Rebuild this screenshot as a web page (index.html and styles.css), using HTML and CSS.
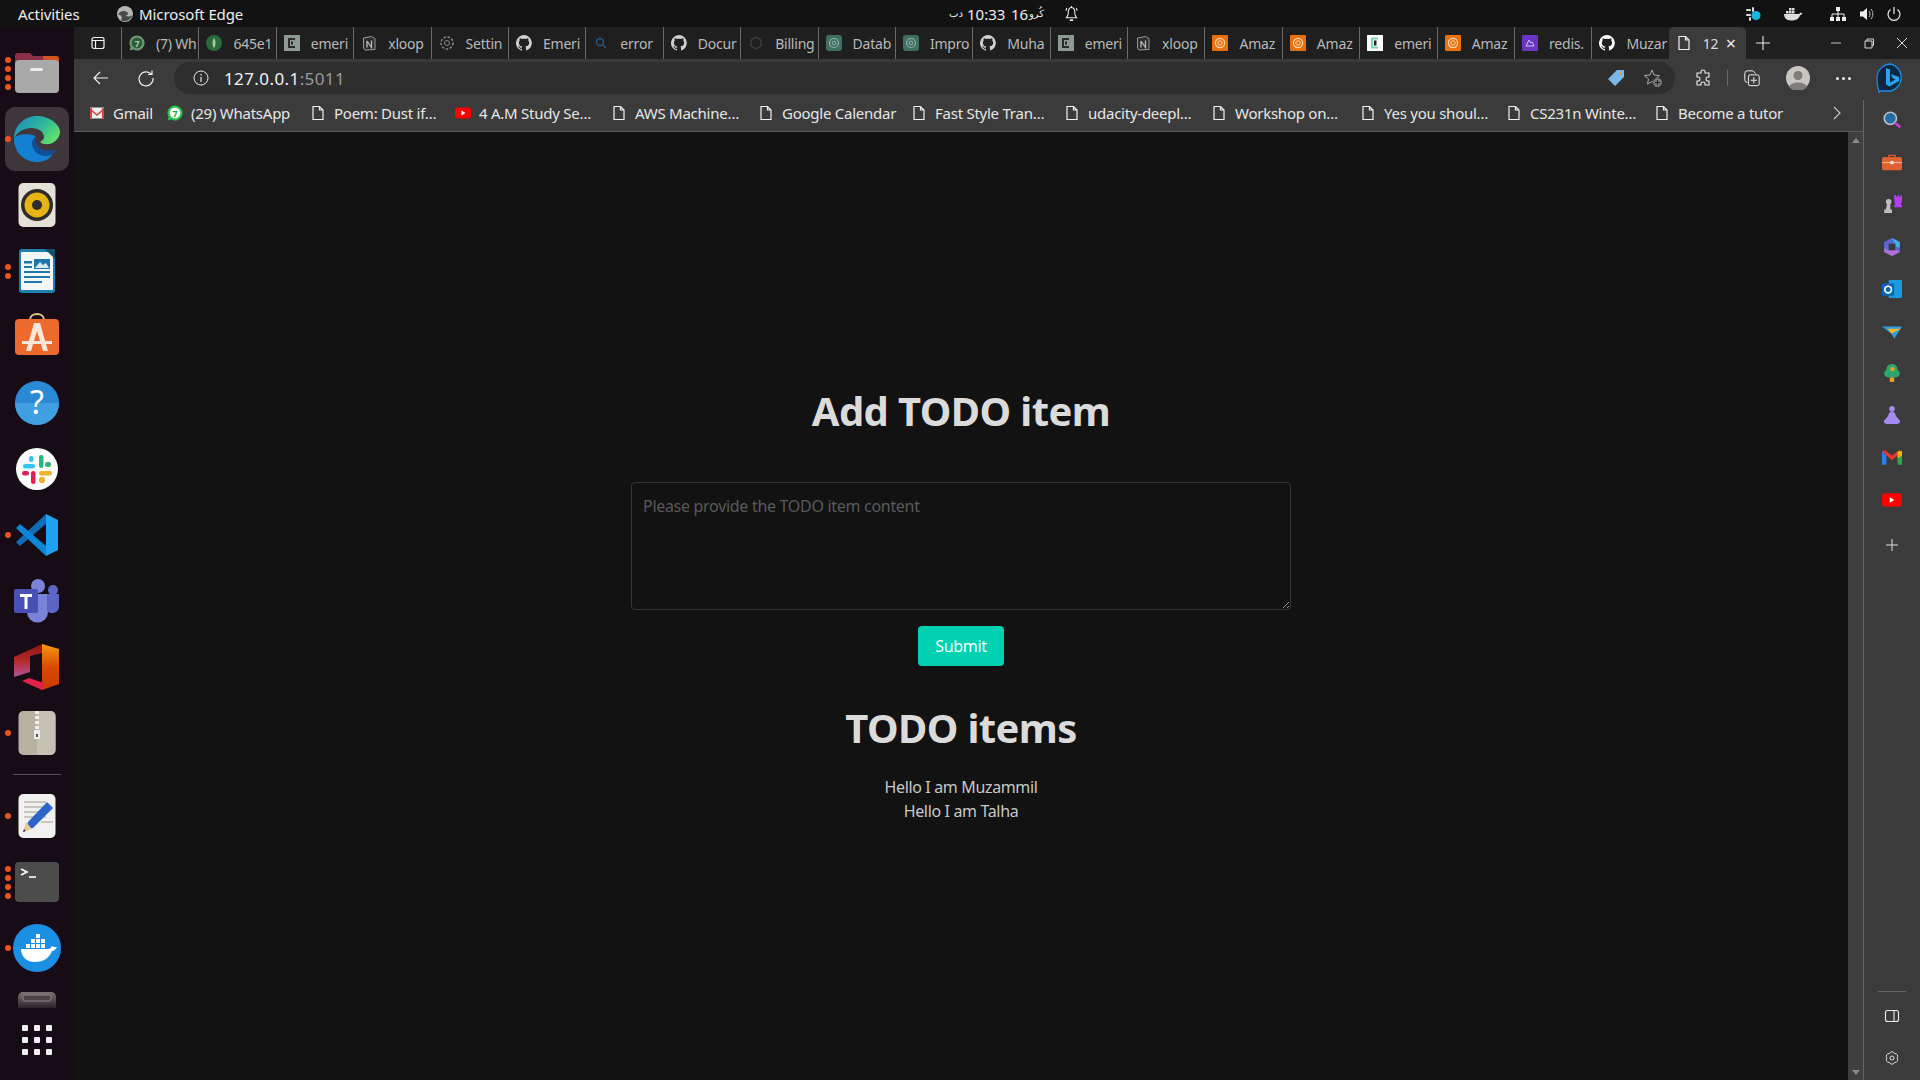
FILE: index.html
```html
<!DOCTYPE html>
<html lang="en">
<head>
    <meta charset="UTF-8">
    <title>Add TODO item</title>
    <link rel="stylesheet" href="styles.css">
</head>
<body>

<svg class="defs" width="0" height="0">
    <defs>
        <symbol id="doc" viewBox="0 0 16 16"><path d="M3 1.5h6.500L13 5v9.500H3z M9.500 1.500V5H13" fill="none" stroke="#f0f0f0" stroke-width="1.200"/></symbol>
        <symbol id="github" viewBox="0 0 16 16"><path fill="currentColor" d="M8 0a8 8 0 0 0-2.500 15.600c.4.100.5-.2.5-.4v-1.400c-2.200.5-2.700-1-2.700-1-.4-.9-.9-1.200-.9-1.200-.7-.5.100-.5.100-.5.800.1 1.200.8 1.200.8.700 1.200 1.900.9 2.300.7.100-.5.300-.9.500-1.100-1.800-.2-3.600-.9-3.600-4 0-.9.300-1.600.800-2.100-.1-.2-.4-1 .1-2.100 0 0 .7-.2 2.200.8a7.600 7.600 0 0 1 4 0c1.500-1 2.200-.8 2.200-.8.400 1.100.2 1.900.1 2.100.5.600.8 1.300.8 2.100 0 3.100-1.900 3.700-3.700 3.900.3.300.6.800.6 1.500v2.200c0 .2.100.5.600.4A8 8 0 0 0 8 0z"/></symbol>
        <symbol id="whatsapp" viewBox="0 0 16 16"><path fill="#25c24a" d="M8 .5a7.500 7.500 0 0 0-6.400 11.400L.6 15.500l3.700-1A7.500 7.500 0 1 0 8 .5z"/><circle cx="8" cy="8" r="5.400" fill="#fff"/><text x="8" y="11.500" class="fav-num" fill="#25a244">7</text></symbol>
        <symbol id="whatsapp-dim" viewBox="0 0 16 16"><path fill="#6f9a78" d="M8 .5a7.500 7.500 0 0 0-6.400 11.400L.6 15.500l3.700-1A7.500 7.500 0 1 0 8 .5z"/><circle cx="8" cy="8" r="5.400" fill="#2a5a38"/><text x="8" y="11.500" class="fav-num" fill="#9fd0aa">7</text></symbol>
        <symbol id="emeritus" viewBox="0 0 16 16"><rect width="16" height="16" fill="#8d9a94"/><path d="M11 4H5v8h6" fill="none" stroke="#2b2b2b" stroke-width="2"/><rect x="7" y="6.500" width="2" height="3" fill="#2b2b2b"/></symbol>
        <symbol id="emeritus-white" viewBox="0 0 16 16"><rect width="16" height="16" fill="#fff"/><path d="M11 3.500H5v9h6" fill="none" stroke="#7fd3b0" stroke-width="2"/><rect x="7" y="5.500" width="2.500" height="5" fill="#222"/></symbol>
        <symbol id="notion" viewBox="0 0 16 16"><path d="M2.500 3l8-1.500L14 3.500v11l-10 .500-1.500-2z" fill="#2c2c2c" stroke="#9a9a9a"/><path d="M6 6v6.500M6 6l4.500 6.500V5.500" fill="none" stroke="#bdbdbd" stroke-width="1.300"/></symbol>
        <symbol id="amazon" viewBox="0 0 16 16"><rect width="16" height="16" rx="1" fill="#e8700f"/><circle cx="8" cy="8" r="4.600" fill="none" stroke="#f8d9b0" stroke-width="1.200"/><circle cx="8" cy="8" r="2.200" fill="none" stroke="#f8d9b0"/></symbol>
        <symbol id="openai" viewBox="0 0 16 16"><rect width="16" height="16" rx="3" fill="#3f6f63"/><circle cx="8" cy="8" r="4.500" fill="none" stroke="#8fb5aa" stroke-width="1.200"/><circle cx="8" cy="8" r="1.800" fill="none" stroke="#8fb5aa"/></symbol>
        <symbol id="cube" viewBox="0 0 16 16"><path d="M8 2l5 3v6l-5 3-5-3V5z" fill="none" stroke="#4a4a4a"/></symbol>
    </defs>
</svg>

<div class="topbar">
    <span class="activities">Activities</span>
    <div class="appname">
        <svg class="appname-icon" viewBox="0 0 16 16"><circle cx="8" cy="8" r="8" fill="#b5b5b5"/><path d="M1 9c1-4 6-5 9-3 2 1.500 1 3-1 3 2 3 5 1 6.500 0C14 14 8 17 4 14 6 12 4 8 1 9z" fill="#4a4a4a"/></svg>
        <span>Microsoft Edge</span>
    </div>
    <div class="clock">
        <span class="clock-ar">دب</span>
        <span class="clock-time">10:33</span>
        <span class="clock-day">16</span>
        <span class="clock-ar clock-month">كُرو</span>
        <svg class="bell" viewBox="0 0 16 18"><path d="M8 2C5 2 4.500 5 4.500 8c0 2-1 4-2 5h11c-1-1-2-3-2-5 0-3-.5-6-3.500-6zM8 .5V2M2 5.500l1-3M14 5.500l-1-3" fill="none" stroke="#eee" stroke-width="1.100"/><rect x="6" y="14.500" width="4" height="2" rx="1" fill="#eee"/></svg>
    </div>
    <div class="tray">
        <svg class="tray-slack" viewBox="0 0 16 16"><rect x="1" y="3" width="5" height="2" rx="1" fill="#ddd"/><rect x="1" y="8" width="5" height="2" rx="1" fill="#ddd"/><rect x="7" y="1" width="2" height="5" rx="1" fill="#ddd"/><rect x="4" y="11" width="2" height="4" rx="1" fill="#ddd"/><circle cx="11" cy="9.500" r="4.500" fill="#19b5e0"/></svg>
        <svg class="tray-docker" viewBox="0 0 20 14"><path d="M1 7h14c1 0 2-.5 2.500-1.500.5.500 1.500.500 2 .5-.5 1.500-1.500 2-2.500 2.200C16 11.500 13 13.500 8 13.500 3 13.500 1 10.500 1 7z" fill="#ddd"/><path d="M3 4h2.500v2.500H3zM6 4h2.500v2.500H6zM9 4h2.500v2.500H9zM6 1h2.500v2.500H6zM9 1h2.500v2.500H9z" fill="#ddd"/></svg>
        <svg class="tray-net" viewBox="0 0 16 16"><path d="M6 1h4v4H6zM0 11h4v4H0zM6 11h4v4H6zM12 11h4v4h-4z" fill="#eee"/><path d="M8 5v6M2 11V8h12v3" stroke="#eee" fill="none"/></svg>
        <svg class="tray-vol" viewBox="0 0 16 16"><path d="M1 5.500h3L8 2v12l-4-3.500H1z" fill="#eee"/><path d="M10 5c1.300 1.500 1.300 4.500 0 6M12 3c2.400 2.500 2.400 7.500 0 10" fill="none" stroke="#bbb"/></svg>
        <svg class="tray-power" viewBox="0 0 16 16"><path d="M8 1v7M4.500 3.500a6 6 0 1 0 7 0" fill="none" stroke="#eee" stroke-width="1.200"/></svg>
    </div>
</div>

<div class="desktop">
    <nav class="dock">
        <div class="dock-item">
            <div class="dots"><i></i><i></i><i></i><i></i></div>
            <svg viewBox="0 0 48 48"><path d="M2 7a3 3 0 0 1 3-3h12l3 3h23a3 3 0 0 1 3 3v8H2z" fill="#8a2f47"/><path d="M30 7h13a3 3 0 0 1 3 3v6H30z" fill="#d1541f"/><rect x="2" y="11" width="44" height="33" rx="4" fill="#a9a9a9"/><rect x="17" y="19" width="13" height="3" rx="1.500" fill="#eee"/></svg>
        </div>
        <div class="dock-item dock-item-active">
            <div class="dots"><i></i></div>
            <svg viewBox="0 0 48 48"><defs><linearGradient id="edgeA" x1="0" y1="0" x2="1" y2=".6"><stop offset="0" stop-color="#1a84c9"/><stop offset=".6" stop-color="#2fb99a"/><stop offset="1" stop-color="#5ede6c"/></linearGradient></defs><path d="M24 1C11 1 1 11 1 24c2-6 9-11 17-11 8 0 13 4 13 9 0 2-2 4-4 5 3 3 10 3 14 0 3-2 6-6 6-10C47 9 36 1 24 1z" fill="url(#edgeA)"/><path d="M1 24c0 13 10 23 23 23 6 0 12-2 16-8-5 3-13 2-17-2-5-5-5-12 0-16C14 18 3 19 1 24z" fill="#1380d2"/><path d="M23 21c-5 4-5 11 0 16 4 4 12 5 17 2 1-1 2-3 3-5-4 2-11 3-16-1-3-2-5-7-4-12z" fill="#0f4f99"/></svg>
        </div>
        <div class="dock-item">
            <svg viewBox="0 0 48 48"><rect x="5.500" y="2" width="37" height="44" rx="5" fill="#e4e1d6"/><circle cx="24" cy="24" r="16" fill="#2e2c2a"/><circle cx="24" cy="24" r="12.500" fill="#e7b416"/><circle cx="24" cy="24" r="5" fill="#2e2c2a"/></svg>
        </div>
        <div class="dock-item">
            <div class="dots"><i></i><i></i></div>
            <svg viewBox="0 0 48 48"><path d="M6 5a3 3 0 0 1 3-3h23l10 10v31a3 3 0 0 1-3 3H9a3 3 0 0 1-3-3z" fill="#1f7fb0"/><rect x="8" y="5" width="32" height="38" rx="1" fill="#f4f6f7"/><path d="M32 2h10v10z" fill="#174f6f"/><path d="M11 14h8v2.500h-8zM11 19h8v2h-8zM11 24h26v2H11zM11 29h26v2H11zM11 34h18v2H11z" fill="#1f78ad"/><rect x="21" y="12" width="16" height="10" fill="#1f78ad"/><path d="M22 21l5-6 3 3 3-2 3 5z" fill="#dbe9f2"/></svg>
        </div>
        <div class="dock-item">
            <svg viewBox="0 0 48 48"><path d="M17 7c0-8 14-8 14 0" fill="none" stroke="#e8c48e" stroke-width="2"/><rect x="2" y="6" width="44" height="36" rx="4" fill="#ec6a2c"/><path d="M21 10h6l8 28h-5l-6-20-6 20h-5zM9 28h30v3H9z" fill="#fbe6da"/></svg>
        </div>
        <div class="dock-item">
            <svg viewBox="0 0 48 48"><circle cx="24" cy="24" r="22" fill="#2b8ad6"/><path d="M2 24h44a22 22 0 0 1-44 0z" fill="#3f9fe0"/><text x="24" y="35" class="dock-help">?</text></svg>
        </div>
        <div class="dock-item">
            <svg viewBox="0 0 48 48"><circle cx="24" cy="24" r="21" fill="#fff"/><rect x="10" y="19" width="12" height="4.500" rx="2.200" fill="#36c5f0"/><rect x="16" y="11" width="4.500" height="6" rx="2.200" fill="#36c5f0"/><rect x="26" y="10" width="4.500" height="13" rx="2.200" fill="#2eb67d"/><rect x="32" y="17" width="6" height="5" rx="2.200" fill="#2eb67d"/><rect x="26" y="26" width="13" height="4.500" rx="2.200" fill="#ecb22e"/><rect x="26" y="32" width="6" height="6" rx="2.200" fill="#ecb22e"/><rect x="18" y="26" width="4.500" height="13" rx="2.200" fill="#e01e5a"/><rect x="9" y="26" width="7" height="4.500" rx="2.200" fill="#e01e5a"/></svg>
        </div>
        <div class="dock-item">
            <div class="dots"><i></i></div>
            <svg viewBox="0 0 48 48"><path d="M33 3L3 31l4 4 26-22z" fill="#0f6db5"/><path d="M33 45L3 17l4-4 26 22z" fill="#0a85d8"/><path d="M33 3l12 6v30l-12 6z" fill="#20a0f0"/></svg>
        </div>
        <div class="dock-item">
            <svg viewBox="0 0 48 48"><circle cx="25" cy="9" r="7" fill="#7b83d9"/><circle cx="40" cy="13" r="5" fill="#5c64c4"/><path d="M14 17h21v18a10 10 0 0 1-21 0z" fill="#7b83d9"/><path d="M34 17h12v13a7 7 0 0 1-12 4z" fill="#5c64c4"/><rect x="1" y="12" width="24" height="24" rx="2" fill="#4750b5"/><path d="M7 17h12v3h-4.500v12h-3V20H7z" fill="#fff"/></svg>
        </div>
        <div class="dock-item">
            <svg viewBox="0 0 48 48"><defs><linearGradient id="officeR" x1="0" y1="0" x2="0" y2="1"><stop offset="0" stop-color="#f59a0c"/><stop offset=".5" stop-color="#da4a00"/><stop offset="1" stop-color="#c93c00"/></linearGradient><linearGradient id="officeL" x1="0" y1="0" x2="0" y2="1"><stop offset="0" stop-color="#8c1212"/><stop offset=".5" stop-color="#b52a2a"/><stop offset="1" stop-color="#b0529a"/></linearGradient></defs><path d="M29 1l17 5v35l-17 6z" fill="url(#officeR)"/><path d="M29 1L1 14v20l16-5V13l12-3z" fill="url(#officeL)"/><path d="M9 38l20 9 2-7-15-5z" fill="#e0224a"/></svg>
        </div>
        <div class="dock-item">
            <div class="dots"><i></i></div>
            <svg viewBox="0 0 48 48"><rect x="5.500" y="2" width="37" height="44" rx="5" fill="#b6b2a2"/><path d="M24 2h13.500a5 5 0 0 1 5 5v34a5 5 0 0 1-5 5H24z" fill="#c5c2b3"/><path d="M22 2h4v3h-4zM22 7h4v3h-4zM22 12h4v3h-4zM22 17h4v3h-4z" fill="#eee"/><rect x="21" y="21" width="6" height="9" fill="#eee"/><rect x="23" y="25" width="2" height="3" fill="#555"/></svg>
        </div>
        <div class="dock-sep"></div>
        <div class="dock-item">
            <div class="dots"><i></i></div>
            <svg viewBox="0 0 48 48"><rect x="5.500" y="2" width="37" height="44" rx="5" fill="#f1f1f1"/><path d="M11 9h22v2H11zM11 14h24v2H11zM11 19h24v2H11zM11 24h22v2H11zM28 29h12v2H28z" fill="#c8c6bd"/><path d="M34 10l6 6-20 20-7 2 2-8z" fill="#2a66c9"/><path d="M13 30l-3 10 9-3z" fill="#e9c99b"/><path d="M10 40l1-3 2 2z" fill="#333"/></svg>
        </div>
        <div class="dock-item">
            <div class="dots"><i></i><i></i><i></i><i></i></div>
            <svg viewBox="0 0 48 48"><rect x="2" y="4" width="44" height="40" rx="4" fill="#4c4c4c"/><path d="M8 11l6 3-6 3" fill="none" stroke="#fff" stroke-width="1.600"/><path d="M16 19h7" stroke="#fff" stroke-width="1.600"/></svg>
        </div>
        <div class="dock-item">
            <div class="dots"><i></i></div>
            <svg viewBox="0 0 48 48"><circle cx="24" cy="24" r="24" fill="#1a8fe3"/><path d="M8 25h27c2 0 3-1 4-3 1 1 3 1 5 1-1 2-3 4-5 4-3 7-8 11-17 11-9 0-14-6-14-13z" fill="#fff"/><path d="M13 20h4v4h-4zM18 20h4v4h-4zM23 20h4v4h-4zM28 20h4v4h-4zM18 15h4v4h-4zM23 15h4v4h-4zM28 15h4v4h-4zM23 10h4v4h-4z" fill="#fff"/></svg>
        </div>
        <div class="dock-disk">
            <svg viewBox="0 0 48 16"><defs><linearGradient id="diskA" x1="0" y1="0" x2="0" y2="1"><stop offset="0" stop-color="#7a7476"/><stop offset="1" stop-color="#2c2228"/></linearGradient></defs><path d="M5 16V5a5 5 0 0 1 5-5h28a5 5 0 0 1 5 5v11z" fill="url(#diskA)"/><rect x="10" y="3" width="28" height="6" rx="2" fill="#4a4446" stroke="#8a8486"/></svg>
        </div>
        <div class="dock-grid"><i></i><i></i><i></i><i></i><i></i><i></i><i></i><i></i><i></i></div>
    </nav>

    <div class="browser">
        <div class="tabstrip">
            <svg class="tabstrip-btn" viewBox="0 0 16 16"><path d="M2 4.500A2 2 0 0 1 4 2.500h8a2 2 0 0 1 2 2v7a2 2 0 0 1-2 2H4a2 2 0 0 1-2-2zM2 5.500h12M5.500 5.500v8" fill="none" stroke="#f2f2f2" stroke-width="1.200"/></svg>
            <div class="tabs">
                <div class="tab"><svg><use href="#whatsapp-dim"/></svg><span>(7) Wh</span></div>
                <div class="tab"><svg viewBox="0 0 16 16"><circle cx="8" cy="8" r="8" fill="#2c6a3a"/><path d="M8 3c2 2 2 8 0 10-2-2-2-8 0-10z" fill="#a7c7a7"/></svg><span>645e1</span></div>
                <div class="tab"><svg><use href="#emeritus"/></svg><span>emeri</span></div>
                <div class="tab"><svg><use href="#notion"/></svg><span>xloop</span></div>
                <div class="tab"><svg viewBox="0 0 16 16"><circle cx="8" cy="8" r="2.500" fill="none" stroke="#8a8a8a"/><circle cx="8" cy="8" r="6" fill="none" stroke="#8a8a8a" stroke-width="1.500" stroke-dasharray="2.500 1.500"/></svg><span>Settin</span></div>
                <div class="tab"><svg><use href="#github"/></svg><span>Emeri</span></div>
                <div class="tab"><svg viewBox="0 0 16 16"><circle cx="7" cy="7" r="3.500" fill="none" stroke="#1e5f96" stroke-width="1.300"/><path d="M9.500 9.500l3.500 3.500" stroke="#1e5f96" stroke-width="1.300"/></svg><span>error</span></div>
                <div class="tab"><svg><use href="#github"/></svg><span>Docur</span></div>
                <div class="tab"><svg><use href="#cube"/></svg><span>Billing</span></div>
                <div class="tab"><svg><use href="#openai"/></svg><span>Datab</span></div>
                <div class="tab"><svg><use href="#openai"/></svg><span>Impro</span></div>
                <div class="tab"><svg><use href="#github"/></svg><span>Muha</span></div>
                <div class="tab"><svg><use href="#emeritus"/></svg><span>emeri</span></div>
                <div class="tab"><svg><use href="#notion"/></svg><span>xloop</span></div>
                <div class="tab"><svg><use href="#amazon"/></svg><span>Amaz</span></div>
                <div class="tab"><svg><use href="#amazon"/></svg><span>Amaz</span></div>
                <div class="tab"><svg><use href="#emeritus-white"/></svg><span>emeri</span></div>
                <div class="tab"><svg><use href="#amazon"/></svg><span>Amaz</span></div>
                <div class="tab"><svg viewBox="0 0 16 16"><rect width="16" height="16" rx="1" fill="#6a35c4"/><path d="M4 11l3-6 2 3 1-1 2 4z" fill="none" stroke="#d9c8f5"/></svg><span>redis.</span></div>
                <div class="tab tab-white"><svg><use href="#github"/></svg><span>Muzar</span></div>
                <div class="tab tab-active"><svg><use href="#doc"/></svg><span>12</span><b class="tab-close">×</b></div>
            </div>
            <svg class="newtab" viewBox="0 0 16 16"><path d="M8 1v14M1 8h14" stroke="#e6e6e6" stroke-width="1.100"/></svg>
            <div class="winbtns">
                <svg viewBox="0 0 12 12"><path d="M1 6h10" stroke="#b5b5b5" stroke-width="1.100"/></svg>
                <svg viewBox="0 0 12 12"><path d="M2 4h7v7H2zM4 4V2h6.500v6.500H9" fill="none" stroke="#d8d8d8"/></svg>
                <svg viewBox="0 0 12 12"><path d="M1 1l10 10M11 1L1 11" stroke="#d8d8d8" stroke-width="1"/></svg>
            </div>
        </div>

        <div class="toolbar">
            <svg class="tool-icon" viewBox="0 0 18 18"><path d="M16 9H2M8 3L2 9l6 6" fill="none" stroke="#eee" stroke-width="1.200"/></svg>
            <svg class="tool-icon" viewBox="0 0 18 18"><path d="M14.500 5.500A7 7 0 1 0 16 9M11 5.500h4v-4" fill="none" stroke="#eee" stroke-width="1.200"/></svg>
            <div class="addressbar">
                <svg class="info" viewBox="0 0 16 16"><circle cx="8" cy="8" r="7" fill="none" stroke="#e8e8e8"/><path d="M8 7v5M8 4v1.500" stroke="#e8e8e8" stroke-width="1.200"/></svg>
                <span class="url">127.0.0.1<span class="url-port">:5011</span></span>
                <svg class="addr-tag" viewBox="0 0 18 18"><path d="M10 1h7v7l-9 9-7-7z" fill="#7ab8ea"/><circle cx="13.500" cy="4.500" r="1.500" fill="#d8a51d"/></svg>
                <svg class="addr-fav" viewBox="0 0 20 20"><path d="M9 2l2 5 5.500.5-4 3.500 1 5-4.500-2.500L4.500 16l1-5-4-3.500L7 7z" fill="none" stroke="#aaa"/><circle cx="14.500" cy="14.500" r="4.500" fill="#777"/><path d="M14.500 12v5M12 14.500h5" stroke="#222"/></svg>
            </div>
            <svg class="tool-ext" viewBox="0 0 18 18"><path d="M7 2.500c0-2 4-2 4 0V4h4v4h-1.500c-2 0-2 4 0 4H15v4h-4v-1.500c0-2-4-2-4 0V16H3v-4h1.500c2 0 2-4 0-4H3V4h4z" fill="none" stroke="#eee" stroke-width="1.100"/></svg>
            <i class="tool-sep"></i>
            <svg class="tool-coll" viewBox="0 0 20 20"><path d="M5 15a3 3 0 0 1-3-3V5a3 3 0 0 1 3-3h6l3 3" fill="none" stroke="#eee" stroke-width="1.100"/><rect x="6" y="6.500" width="12" height="12" rx="2" fill="none" stroke="#eee" stroke-width="1.100"/><path d="M12 9v7M8.500 12.500h7" stroke="#eee" stroke-width="1.100"/></svg>
            <svg class="tool-avatar" viewBox="0 0 24 24"><circle cx="12" cy="12" r="12" fill="#c9c5c0"/><circle cx="12" cy="9.500" r="4.500" fill="#7f7c79"/><path d="M3 21c2-6 16-6 18 0a12 12 0 0 1-18 0z" fill="#7f7c79"/></svg>
            <div class="tool-more"><i></i><i></i><i></i></div>
            <svg class="tool-bing" viewBox="0 0 30 30"><path d="M15 1a14 14 0 0 1 0 27H4l-1 1.500C1 22 1 18 1 15A14 14 0 0 1 15 1z" fill="#10253f" stroke="#1a8be0" stroke-width="1.300"/><path d="M10 5l4 1.500v13l5.500-3-3-1.500-1.500-4 8 3v4l-9.500 5.500-3.500-2z" fill="#2aa3ef"/></svg>
        </div>

        <div class="under-toolbar">
            <div class="page-col">
                <div class="bookmarks">
                    <a class="bm bm-gmail"><svg viewBox="0 0 16 16"><rect x="1" y="2.500" width="14" height="11" fill="#eee"/><path d="M1 3l7 6 7-6v2L8 11 1 5z" fill="#d4473b"/><path d="M1 3h2v10.500H1zM13 3h2v10.500h-2z" fill="#d4473b"/></svg><span>Gmail</span></a>
                    <a class="bm bm-wa"><svg><use href="#whatsapp"/></svg><span>(29) WhatsApp</span></a>
                    <a class="bm bm-poem"><svg><use href="#doc"/></svg><span>Poem: Dust if…</span></a>
                    <a class="bm bm-yt"><svg viewBox="0 0 16 16"><rect y="2.500" width="16" height="11" rx="3" fill="#f00"/><path d="M6.500 5.500l4 2.500-4 2.500z" fill="#fff"/></svg><span>4 A.M Study Se…</span></a>
                    <a class="bm bm-aws"><svg><use href="#doc"/></svg><span>AWS Machine…</span></a>
                    <a class="bm bm-cal"><svg><use href="#doc"/></svg><span>Google Calendar</span></a>
                    <a class="bm bm-cal"><svg><use href="#doc"/></svg><span>Fast Style Tran…</span></a>
                    <a class="bm bm-uda"><svg><use href="#doc"/></svg><span>udacity-deepl…</span></a>
                    <a class="bm bm-work"><svg><use href="#doc"/></svg><span>Workshop on…</span></a>
                    <a class="bm bm-yes"><svg><use href="#doc"/></svg><span>Yes you shoul…</span></a>
                    <a class="bm bm-cs"><svg><use href="#doc"/></svg><span>CS231n Winte…</span></a>
                    <a class="bm"><svg><use href="#doc"/></svg><span>Become a tutor</span></a>
                    <svg class="bm-more" viewBox="0 0 10 16"><path d="M2 2l6 6-6 6" fill="none" stroke="#ccc" stroke-width="1.100"/></svg>
                </div>
                <div class="page-row">
                    <main class="page">
                        <h1 class="title">Add TODO item</h1>
                        <textarea class="todo-input" placeholder="Please provide the TODO item content"></textarea>
                        <button class="submit">Submit</button>
                        <h2 class="title title-items">TODO items</h2>
                        <ul class="todo-list">
                            <li>Hello I am Muzammil</li>
                            <li>Hello I am Talha</li>
                        </ul>
                    </main>
                    <div class="scrollbar">
                        <i class="arrow-up"></i>
                        <i class="arrow-down"></i>
                    </div>
                </div>
            </div>
            <aside class="sidebar">
                <svg viewBox="0 0 18 18"><circle cx="7.500" cy="7.500" r="5.500" fill="#1f6fa5" stroke="#bdbdbd" stroke-width="1.500"/><path d="M11.500 11.500l5 4" stroke="#c93bd8" stroke-width="2.500"/></svg>
                <svg viewBox="0 0 18 18"><path d="M6 5V3h6v2" fill="none" stroke="#d9562c" stroke-width="1.200"/><rect y="4.500" width="18" height="12" rx="1.500" fill="#e0602f"/><path d="M0 9.500h18" stroke="#f2b49a"/><rect x="7.500" y="8" width="3" height="3" fill="#ddd"/></svg>
                <svg viewBox="0 0 18 18"><path d="M11 1h1.500v1.500H14V1h1.500v1.500H17V1h1v5l-1 4h1v2h-7v-2h1l-1-4z" fill="#b23ff0"/><circle cx="6" cy="7" r="2.500" fill="#bdbdbd"/><path d="M4.500 9h3v5h1.500v3H2v-3h1.500z" fill="#bdbdbd"/></svg>
                <svg viewBox="0 0 18 18"><path d="M9 1l7 3.500v9L9 17l-7-3.500v-9z" fill="#5a67d8"/><path d="M9 1l7 3.500v5l-4-1V6z" fill="#3bb3ea"/><path d="M2 10l4 2 6-1 4 2.500L9 17l-7-3.500z" fill="#b06fd8"/><path d="M6 6h6v6H6z" fill="#3b3b3b"/></svg>
                <svg viewBox="0 0 18 18"><rect x="6" y="1" width="12" height="16" rx="1" fill="#1c9ae0"/><rect x="0" y="4" width="11" height="11" rx="1" fill="#0a64b8"/><circle cx="5.500" cy="9.500" r="3" fill="none" stroke="#fff" stroke-width="1.500"/></svg>
                <svg viewBox="0 0 18 18"><path d="M0 5h18L11 16 8.500 11.500z" fill="#2c9fe5"/><path d="M5 7h12l-8.500 4.500z" fill="#f0b429"/></svg>
                <svg viewBox="0 0 18 18"><path d="M9 1c4 0 5 3 5 5 1.500 1 2.500 2.500 2 4-.5 2-2 3-4 3H6c-2 0-3.500-1-4-3-.5-1.500.5-3 2-4 0-2 1-5 5-5z" fill="#2ea66b"/><rect x="7" y="13" width="4" height="4" fill="#e9a21f"/><circle cx="9.500" cy="5.500" r="2" fill="#e9a21f"/></svg>
                <svg viewBox="0 0 18 18"><circle cx="9" cy="3.500" r="2.500" fill="#a58af0"/><path d="M9 6c2 0 3 1 3.500 4l3.500 4c1 2-1 3-2 3H4c-1 0-3-1-2-3l3.500-4C6 7 7 6 9 6z" fill="#a58af0"/></svg>
                <svg viewBox="0 0 18 18"><path d="M0 3v12h4V7z" fill="#2c7fe8"/><path d="M18 3v12h-4V7z" fill="#2fa44f"/><path d="M0 3c1-1 3-1 4 0l5 4 5-4c1-1 3-1 4 0L9 11z" fill="#e5392f"/><path d="M14 3.500c1-1 3-1 4-.5v4l-4 2z" fill="#f4b400"/></svg>
                <svg viewBox="0 0 18 18"><rect y="3" width="18" height="12" rx="3" fill="#f00"/><path d="M7 6.500l4 2.500-4 2.500z" fill="#fff"/></svg>
                <svg class="side-plus" viewBox="0 0 14 14"><path d="M7 1v12M1 7h12" stroke="#e0e0e0"/></svg>
                <div class="side-bottom">
                    <i class="side-line"></i>
                    <svg viewBox="0 0 16 16"><rect x="1.500" y="2.500" width="13" height="11" rx="2" fill="none" stroke="#eee" stroke-width="1.100"/><path d="M10 2.500v11" stroke="#eee" stroke-width="1.100"/></svg>
                    <svg viewBox="0 0 16 16"><circle cx="8" cy="8" r="2" fill="none" stroke="#ddd"/><path d="M13 8A2.600 2.600 0 0 1 10.500 12.330A2.600 2.600 0 0 1 5.500 12.330A2.600 2.600 0 0 1 3 8A2.600 2.600 0 0 1 5.500 3.670A2.600 2.600 0 0 1 10.500 3.670A2.600 2.600 0 0 1 13 8z" fill="none" stroke="#ddd"/></svg>
                </div>
            </aside>
        </div>
    </div>
</div>

</body>
</html>
```

FILE: styles.css
```css
* { box-sizing: border-box; }
body {
    margin: 0;
    width: 1920px;
    height: 1080px;
    overflow: hidden;
    background: #121212;
    font-family: "Noto Sans", sans-serif;
    color: #ddd;
    display: flex;
    flex-direction: column;
}
.defs { position: absolute; }
.fav-num { font: bold 9px "Noto Sans", sans-serif; text-anchor: middle; }

/* gnome top bar */
.topbar {
    height: 27px;
    background: #121212;
    display: flex;
    align-items: center;
    position: relative;
    font-size: 15px;
    color: #eee;
    flex-shrink: 0;
}
.activities { margin-left: 18px; width: 99px; letter-spacing: -.1px; }
.appname { display: flex; align-items: center; gap: 6px; letter-spacing: -.1px; }
.appname-icon { width: 16px; height: 16px; }
.clock {
    position: absolute;
    left: 949px;
    top: 0;
    height: 27px;
    display: flex;
    align-items: center;
}
.clock-ar { font: 10px "DejaVu Sans", sans-serif; width: 14px; }
.clock-time { margin-left: 4px; width: 44px; }
.clock-day { width: 18px; }
.clock-month { width: 18px; }
.bell { width: 15px; height: 18px; margin-left: 17px; }
.tray { margin-left: auto; display: flex; align-items: center; }
.tray svg { height: 16px; }
.tray-slack { width: 16px; margin-right: 22px; }
.tray-docker { width: 20px; margin-right: 27px; }
.tray-net { width: 16px; margin-right: 12px; }
.tray-vol { width: 18px; margin-right: 10px; }
.tray-power { width: 16px; margin-right: 18px; }

.desktop { flex: 1; display: flex; min-height: 0; }

/* ubuntu dock */
.dock {
    width: 74px;
    flex-shrink: 0;
    background: #170c15;
    padding-top: 13px;
    display: flex;
    flex-direction: column;
    align-items: center;
}
.dock-item {
    width: 64px;
    height: 66px;
    flex-shrink: 0;
    display: flex;
    align-items: center;
    justify-content: center;
    position: relative;
}
.dock-item svg { width: 48px; height: 48px; }
.dock-item-active { background: #3f363c; border-radius: 10px; height: 64px; margin: 1px 0; }
.dots {
    position: absolute;
    left: 0;
    top: 0;
    bottom: 0;
    width: 6px;
    display: flex;
    flex-direction: column;
    justify-content: center;
    gap: 3px;
}
.dots i { width: 6px; height: 6px; border-radius: 50%; background: #e95420; }
.dock-help { font: 32px "Noto Sans", sans-serif; fill: #fff; text-anchor: middle; }
.dock-sep { width: 48px; height: 1px; background: #5a5257; margin: 8px 0; flex-shrink: 0; }
.dock-disk { height: 16px; width: 48px; flex-shrink: 0; margin-top: 11px; }
.dock-disk svg { display: block; width: 48px; height: 16px; }
.dock-grid {
    margin-top: 17px;
    display: grid;
    grid-template-columns: repeat(3, 6px);
    gap: 6px;
}
.dock-grid i { width: 6px; height: 6px; background: #f0f0f0; border-radius: 1px; }

/* edge chrome */
.browser { flex: 1; display: flex; flex-direction: column; min-width: 0; }
.tabstrip {
    height: 32px;
    flex-shrink: 0;
    background: #1f1f1f;
    display: flex;
    align-items: center;
    padding-left: 16px;
}
.tabstrip-btn { width: 16px; height: 16px; margin-right: 15px; }
.tabs { display: flex; height: 32px; align-items: flex-end; }
.tab {
    width: 77.4px;
    height: 32px;
    padding-left: 7px;
    display: flex;
    align-items: center;
    gap: 11px;
    font-size: 14px;
    color: #b9b9b9;
    white-space: nowrap;
    border-left: 1px solid #6b6b6b;
    letter-spacing: -.2px;
}
.tab svg { width: 16px; height: 16px; flex-shrink: 0; color: #cfcfcf; }
.tab-white svg { color: #fff; }
.tab-active {
    background: #3b3b3b;
    color: #ddd;
    border-left: 0;
    border-radius: 5px 5px 0 0;
}
.tab-active span { width: 16px; }
.tab-close { font-weight: 400; font-size: 18px; line-height: 1; color: #eee; margin-left: -4px; }
.newtab { width: 16px; height: 16px; margin-left: 9px; }
.winbtns { margin-left: auto; display: flex; gap: 21px; padding-right: 12px; }
.winbtns svg { width: 12px; height: 12px; display: block; }

.toolbar {
    height: 38px;
    flex-shrink: 0;
    background: #3b3b3b;
    display: flex;
    align-items: center;
    padding-left: 18px;
}
.tool-icon { width: 18px; height: 18px; margin-right: 27px; }
.addressbar {
    width: 1501px;
    height: 32px;
    margin-left: -8px;
    background: #2e2e2e;
    border-radius: 16px;
    display: flex;
    align-items: center;
    padding-left: 19px;
    font-size: 17px;
    letter-spacing: .4px;
}
.info { width: 16px; height: 16px; margin-right: 15px; }
.url { color: #f2f2f2; }
.url-port { color: #9a9a9a; }
.addr-tag { width: 18px; height: 18px; margin-left: auto; margin-right: 18px; }
.addr-fav { width: 20px; height: 20px; margin-right: 12px; }
.tool-ext { width: 18px; height: 18px; margin-left: 19px; }
.tool-sep { width: 1px; height: 16px; background: #666; margin: 0 15px; }
.tool-coll { width: 18px; height: 18px; }
.tool-avatar { width: 24px; height: 24px; margin-left: 25px; }
.tool-more { display: flex; gap: 3px; margin-left: 26px; }
.tool-more i { width: 3px; height: 3px; background: #f0f0f0; border-radius: 50%; }
.tool-bing { width: 30px; height: 30px; margin-left: 25px; }

.under-toolbar { flex: 1; display: flex; min-height: 0; }
.page-col { flex: 1; display: flex; flex-direction: column; min-width: 0; }

.bookmarks {
    height: 35px;
    flex-shrink: 0;
    background: #3b3b3b;
    border-bottom: 1px solid #5a5a5a;
    display: flex;
    align-items: center;
    padding: 0 0 3px 15px;
    font-size: 15px;
    position: relative;
    letter-spacing: -.25px;
}
.bm { display: flex; align-items: center; gap: 8px; color: #e6e6e6; white-space: nowrap; flex-shrink: 0; }
.bm svg { width: 16px; height: 16px; flex-shrink: 0; }
.bm-gmail { width: 78px; }
.bm-wa { width: 143px; }
.bm-poem { width: 145px; }
.bm-yt { width: 156px; }
.bm-aws { width: 147px; }
.bm-cal { width: 153px; }
.bm-uda { width: 147px; }
.bm-work { width: 149px; }
.bm-yes { width: 146px; }
.bm-cs { width: 148px; }
.bm-more { width: 10px; height: 16px; position: absolute; left: 1758px; top: 8px; }

.page-row { flex: 1; display: flex; min-height: 0; }
.page {
    flex: 1;
    background: #121212;
    display: flex;
    flex-direction: column;
    align-items: center;
    padding-top: 256px;
}
.title {
    margin: 0;
    font-size: 40px;
    font-weight: 700;
    line-height: 45px;
    color: #dbdbdb;
    letter-spacing: -.6px;
}
.todo-input {
    width: 660px;
    height: 128px;
    margin-top: 49px;
    background: #121212;
    border: 1px solid #363636;
    border-radius: 4px;
    padding: 11px 11px;
    font: 16px/24px "Noto Sans", sans-serif;
    letter-spacing: -.3px;
    color: #ddd;
    display: block;
    outline: none;
}
.todo-input::placeholder { color: #5a5a5a; opacity: 1; }
.submit {
    width: 86px;
    height: 40px;
    margin-top: 16px;
    border: 0;
    border-radius: 4px;
    background: #00d1b2;
    color: #fff;
    font: 16px "Noto Sans", sans-serif;
    letter-spacing: -.3px;
    padding: 0;
}
.title-items { margin-top: 39px; }
.todo-list {
    list-style: none;
    margin: 25px 0 0;
    padding: 0;
    text-align: center;
    font-size: 16px;
    line-height: 24px;
    color: #c8c8c8;
    letter-spacing: -.35px;
}
.scrollbar {
    width: 15px;
    flex-shrink: 0;
    background: #3f3f3f;
    display: flex;
    flex-direction: column;
    justify-content: space-between;
    align-items: center;
    padding: 6px 0 5px;
}
.arrow-up { border: 4px solid transparent; border-top: 0; border-bottom: 5px solid #8a8a8a; width: 8px; }
.arrow-down { border: 4px solid transparent; border-bottom: 0; border-top: 5px solid #8a8a8a; width: 8px; }

.sidebar {
    width: 57px;
    flex-shrink: 0;
    margin-top: 3px;
    border-left: 1px solid #666;
    background: #3b3b3b;
    display: flex;
    flex-direction: column;
    align-items: center;
    padding-top: 10px;
    gap: 22.2px;
    box-shadow: 0 -3px 0 #3b3b3b;
}
.sidebar > svg { width: 20px; height: 20px; flex-shrink: 0; }
.sidebar > .side-plus { width: 14px; height: 14px; margin-top: 6px; }
.side-bottom {
    margin-top: auto;
    display: flex;
    flex-direction: column;
    align-items: center;
    gap: 14px;
    padding-bottom: 14px;
}
.side-bottom svg { width: 16px; height: 16px; display: block; }
.side-bottom svg + svg { margin-top: 12px; }
.side-line { width: 28px; height: 1px; background: #666; margin-bottom: 2px; }
```
